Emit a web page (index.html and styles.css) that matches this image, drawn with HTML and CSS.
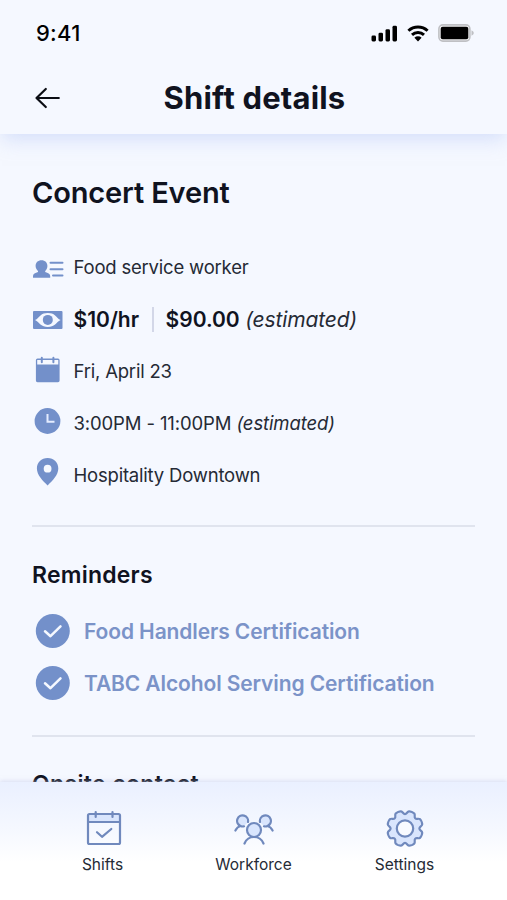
FILE: index.html
```html
<!DOCTYPE html>
<html lang="en">

<head>
    <meta charset="UTF-8">
    <meta name="viewport" content="width=device-width, initial-scale=1.0">
    <title>Shift details</title>
    <link rel="stylesheet" href="styles.css">
</head>

<body>
    <header class="header">
        <div class="status-bar">
            <span class="time">9:41</span>
            <div class="status-icons">
                <svg class="signal" width="27" height="17" viewBox="0 0 27 17">
                    <rect x="0.5" y="10.5" width="4.5" height="6" rx="1.4" />
                    <rect x="7.5" y="7.7" width="4.5" height="8.8" rx="1.4" />
                    <rect x="14.5" y="4.2" width="4.5" height="12.3" rx="1.4" />
                    <rect x="21.5" y="0.8" width="4.5" height="15.7" rx="1.4" />
                </svg>
                <svg class="wifi" width="22" height="17" viewBox="0 0 22 17">
                    <path d="M1.4 5.8a14 14 0 0 1 19.2 0M5 9.9a8.6 8.6 0 0 1 12 0" fill="none" stroke="#000" stroke-width="2.9" />
                    <path d="M7.4 12.7a5.3 5.3 0 0 1 7.2 0L11 16.4z" />
                </svg>
                <svg class="battery" width="36" height="18" viewBox="0 0 36 18">
                    <rect x="0.9" y="0.9" width="31" height="16.2" rx="4" fill="#f3f3f5" stroke="#bfc0c4" stroke-width="1.6" />
                    <rect x="2.7" y="2.8" width="27.6" height="12.4" rx="2" />
                    <path d="M33.5 6.3q2.3 1 2.3 2.7t-2.3 2.7z" fill="#bfc0c4" />
                </svg>
            </div>
        </div>
        <div class="title-bar">
            <svg class="back" width="26" height="22" viewBox="0 0 26 22">
                <path d="M23.8 11H1.5M10.8 2L1.5 11l9.3 9" />
            </svg>
            <h1>Shift details</h1>
        </div>
    </header>

    <main class="content">
        <section class="event">
            <h2>Concert Event</h2>
            <ul class="details">
                <li>
                    <svg width="30" height="30" viewBox="0 0 30 30">
                        <path d="M8.500 8.300c3.700 0 5.900 2.400 5.900 5.700 0 2.100-.9 3.800-2.200 4.900v1c2.700.8 5 1.800 5 4v1.900H0v-1.900c0-2.200 2.300-3.200 5-4v-1C3.700 17.800 2.600 16.100 2.600 14c0-3.300 2.200-5.700 5.900-5.700z" />
                        <path class="line" d="M17.500 10.800h12M17.500 17.200h12M20 23.500h9.500" />
                    </svg>
                    <span>Food service worker</span>
                </li>
                <li class="pay">
                    <svg width="30" height="30" viewBox="0 0 30 30">
                        <rect x="0" y="7" width="29.500" height="18" rx="1" />
                        <path class="light" d="M2 16c2.500-1 3.500-3 5.500-4.600 2-1.600 4-2.400 7.300-2.400s5.300.8 7.300 2.400c2 1.600 3 3.600 5.500 4.600-2.500 1-3.500 3-5.500 4.500-2 1.600-4 2.400-7.300 2.400s-5.300-.8-7.300-2.400c-2-1.500-3-3.500-5.500-4.500z" />
                        <circle cx="14.800" cy="15.900" r="5" />
                    </svg>
                    <b>$10/hr</b>
                    <span class="separator"></span>
                    <b>$90.00</b>
                    <em>(estimated)</em>
                </li>
                <li>
                    <svg width="30" height="30" viewBox="0 0 30 30">
                        <path fill-rule="evenodd" d="M4.500 2.600h20.500a1.600 1.600 0 0 1 1.600 1.600v20.400a1.600 1.600 0 0 1-1.600 1.600H4.500a1.600 1.600 0 0 1-1.600-1.600v-20.400a1.600 1.600 0 0 1 1.600-1.600zM4.200 3.900v4.500h21.100v-4.500z" />
                        <path class="line" d="M8.800 1.800v4.400M20.400 1.800v4.400" />
                    </svg>
                    <span>Fri, April 23</span>
                </li>
                <li class="hours">
                    <svg width="30" height="30" viewBox="0 0 30 30">
                        <circle cx="14.500" cy="13" r="12.900" />
                        <path class="hands" d="M14.500 6v7.700h7" />
                    </svg>
                    <span>3:00PM - 11:00PM <em>(estimated)</em></span>
                </li>
                <li>
                    <svg width="30" height="30" viewBox="0 0 30 30">
                        <path fill-rule="evenodd" d="M14.600-2c6.200 0 10.700 4.600 10.700 10.500 0 6.400-5.700 12.200-10.700 16.900C9.600 20.700 3.900 14.900 3.900 8.500 3.900 2.600 8.400-2 14.600-2zm0 6.800a3.900 3.900 0 1 0 0 7.800 3.900 3.900 0 0 0 0-7.800z" />
                    </svg>
                    <span>Hospitality Downtown</span>
                </li>
            </ul>
        </section>

        <section class="reminders">
            <h3>Reminders</h3>
            <ul>
                <li>
                    <svg width="34" height="34" viewBox="0 0 34 34">
                        <circle cx="16.800" cy="17" r="17" />
                        <path d="M9 17.300l5.500 4.900L24.500 12.300" />
                    </svg>
                    <a>Food Handlers Certification</a>
                </li>
                <li>
                    <svg width="34" height="34" viewBox="0 0 34 34">
                        <circle cx="16.800" cy="17" r="17" />
                        <path d="M9 17.300l5.500 4.900L24.500 12.300" />
                    </svg>
                    <a>TABC Alcohol Serving Certification</a>
                </li>
            </ul>
        </section>

        <section class="contact">
            <h3>Onsite contact</h3>
        </section>
    </main>

    <nav class="tab-bar">
        <a class="tab">
            <svg width="40" height="36" viewBox="-20 -18 40 36">
                <path class="tint" d="M-15-13.500h32v7.500h-32z" />
                <rect x="-15" y="-14" width="32" height="30" rx="1.500" />
                <path d="M-15-6h32M-7.300-16v5M9.500-16v5M-6 4.200l5 4.600L8.300 1" />
            </svg>
            <span>Shifts</span>
        </a>
        <a class="tab">
            <svg width="40" height="36" viewBox="-20 -18 40 36">
                <path class="tint" d="M-6.300-5.500A5.700 5.700 0 1 0-10.300-1.900zM6.300-5.500A5.700 5.700 0 1 1 10.300-1.900z" />
                <path d="M-6-6A5.500 5.500 0 1 0-13.500-2C-15.500-1.500-17.500.3-18.600 2.500M-13.500-2q2 .8 3.500.3M6-6A5.500 5.500 0 1 1 13.500-2C15.500-1.500 17.500.3 18.600 2.500M13.500-2q-2 .8-3.500.3" />
                <circle class="tint outlined" cx="0" cy="2" r="7" />
                <path d="M-9.500 15.500C-8 11.500-4 9 0 9s8 2.500 9.500 6.500" />
            </svg>
            <span>Workforce</span>
        </a>
        <a class="tab">
            <svg width="40" height="36" viewBox="-20 -18.500 40 36">
                <path class="tint outlined" d="M0-14.400C1.800-14.400 2.200-17 4-17.200C5.400-17.300 8.400-16.050 9.300-15C10.500-13.600 8.900-11.500 10.200-10.200C11.500-8.900 13.600-10.500 15-9.300C16.050-8.400 17.300-5.400 17.200-4C17-2.200 14.400-1.800 14.400 0C14.400 1.800 17 2.200 17.200 4C17.300 5.400 16.050 8.400 15 9.300C13.600 10.500 11.500 8.900 10.200 10.200C8.900 11.500 10.500 13.600 9.300 15C8.400 16.050 5.400 17.300 4 17.200C2.200 17 1.800 14.400 0 14.400C-1.800 14.400-2.200 17-4 17.200C-5.400 17.300-8.400 16.050-9.300 15C-10.500 13.600-8.900 11.500-10.200 10.200C-11.500 8.900-13.600 10.500-15 9.300C-16.050 8.400-17.300 5.400-17.200 4C-17 2.200-14.400 1.800-14.400 0C-14.400-1.800-17-2.200-17.200-4C-17.300-5.400-16.050-8.400-15-9.300C-13.600-10.500-11.500-8.900-10.200-10.200C-8.900-11.500-10.500-13.600-9.300-15C-8.400-16.050-5.400-17.300-4-17.200C-2.200-17-1.800-14.400 0-14.400z" />
                <circle class="hole" cx="0" cy="0" r="8.200" />
            </svg>
            <span>Settings</span>
        </a>
    </nav>
</body>

</html>
```
FILE: styles.css
```css
* {
    box-sizing: border-box;
}

body {
    margin: 0;
    height: 900px;
    display: flex;
    flex-direction: column;
    overflow: hidden;
    font-family: Inter, "Liberation Sans", sans-serif;
    background-color: #f5f8ff;
    color: #10131f;
}

h1,
h2,
h3,
ul {
    margin: 0;
    padding: 0;
}

ul {
    list-style: none;
}

svg {
    flex: none;
    overflow: visible;
}

/* Header */
.header {
    height: 134px;
    flex: none;
    background-color: #f5f8ff;
    box-shadow: 0 7px 18px -2px rgba(180, 198, 245, 0.5);
}

.status-bar {
    height: 66px;
    padding: 0 33px 0 36px;
    display: flex;
    align-items: center;
    justify-content: space-between;
}

.time {
    font-size: 22px;
    font-weight: 500;
    letter-spacing: 0.25px;
    color: #000;
}

.status-icons {
    display: flex;
    align-items: center;
    gap: 9px;
}

.title-bar {
    height: 64px;
    padding: 0 35px;
    display: grid;
    grid-template-columns: 26px 1fr 26px;
    align-items: center;
}

.back {
    fill: none;
    stroke: #0b0d14;
    stroke-width: 2.2;
    stroke-linecap: round;
    stroke-linejoin: round;
}

h1 {
    font-size: 31px;
    font-weight: 700;
    line-height: 36px;
    letter-spacing: 0.18px;
    text-align: center;
    padding-left: 2px;
}

/* Shift info */
.content {
    flex: 1;
    min-height: 0;
    overflow: hidden;
    padding: 0 32px;
}

.content section + section {
    border-top: 2px solid #e0e4ee;
}

.event {
    padding-top: 39px;
    height: 391px;
}

h2 {
    font-size: 29px;
    font-weight: 600;
    line-height: 40px;
    letter-spacing: -0.15px;
}

.details {
    padding-top: 28px;
}

.details li {
    height: 52px;
    display: flex;
    align-items: center;
    font-size: 18.5px;
    letter-spacing: -0.2px;
    color: #252a35;
}

.details svg {
    margin: 0 10.5px 0 1px;
    fill: #7390ca;
}

.details .line {
    fill: none;
    stroke: #7390ca;
    stroke-width: 2;
    stroke-linecap: round;
}

.details .light {
    fill: #f5f8ff;
}

.details .hands {
    fill: none;
    stroke: #e4ecff;
    stroke-width: 2;
}

.details .hours {
    letter-spacing: -0.12px;
}

.details .pay {
    font-size: 21px;
    letter-spacing: 0;
}

.pay b {
    font-weight: 600;
    color: #10131f;
}

.pay em {
    margin-left: 5.5px;
    letter-spacing: -0.12px;
}

.separator {
    width: 2px;
    height: 25px;
    margin: 0 12px 0 12.5px;
    background-color: #d3d7e8;
}

/* Reminders */
h3 {
    font-size: 23px;
    font-weight: 600;
    line-height: 30px;
    letter-spacing: 0.22px;
}

.reminders {
    height: 210px;
    padding-top: 33px;
}

.reminders ul {
    padding-top: 15px;
}

.reminders li {
    height: 52px;
    padding-left: 4px;
    display: flex;
    align-items: center;
    gap: 14px;
    font-size: 21px;
    font-weight: 600;
    letter-spacing: -0.11px;
    color: #7b93c8;
}

.reminders circle {
    fill: #7390ca;
}

.reminders path {
    fill: none;
    stroke: #f5f8ff;
    stroke-width: 2.5;
    stroke-linecap: round;
    stroke-linejoin: round;
}

.contact {
    padding-top: 32px;
}

.contact h3 {
    letter-spacing: 0.35px;
}

/* Bottom tabs */
.tab-bar {
    height: 118px;
    flex: none;
    padding: 28px 27px 0;
    display: grid;
    grid-template-columns: 1fr 1fr 1fr;
    background: linear-gradient(#eaf0ff, #f5f8ff 40%, #fff 68%);
    box-shadow: 0 -1px 4px rgba(190, 195, 230, 0.5);
}

.tab {
    display: flex;
    flex-direction: column;
    align-items: center;
    gap: 9px;
    font-size: 15.5px;
    line-height: 20px;
    color: #252a35;
}

.tab svg {
    fill: none;
    stroke: #7089bd;
    stroke-width: 2.2;
    stroke-linecap: round;
    stroke-linejoin: round;
}

.tab .tint {
    fill: #d9e5fd;
    stroke: none;
}

.tab .outlined {
    stroke: #7089bd;
}

.tab .hole {
    fill: #f8faff;
}
```
